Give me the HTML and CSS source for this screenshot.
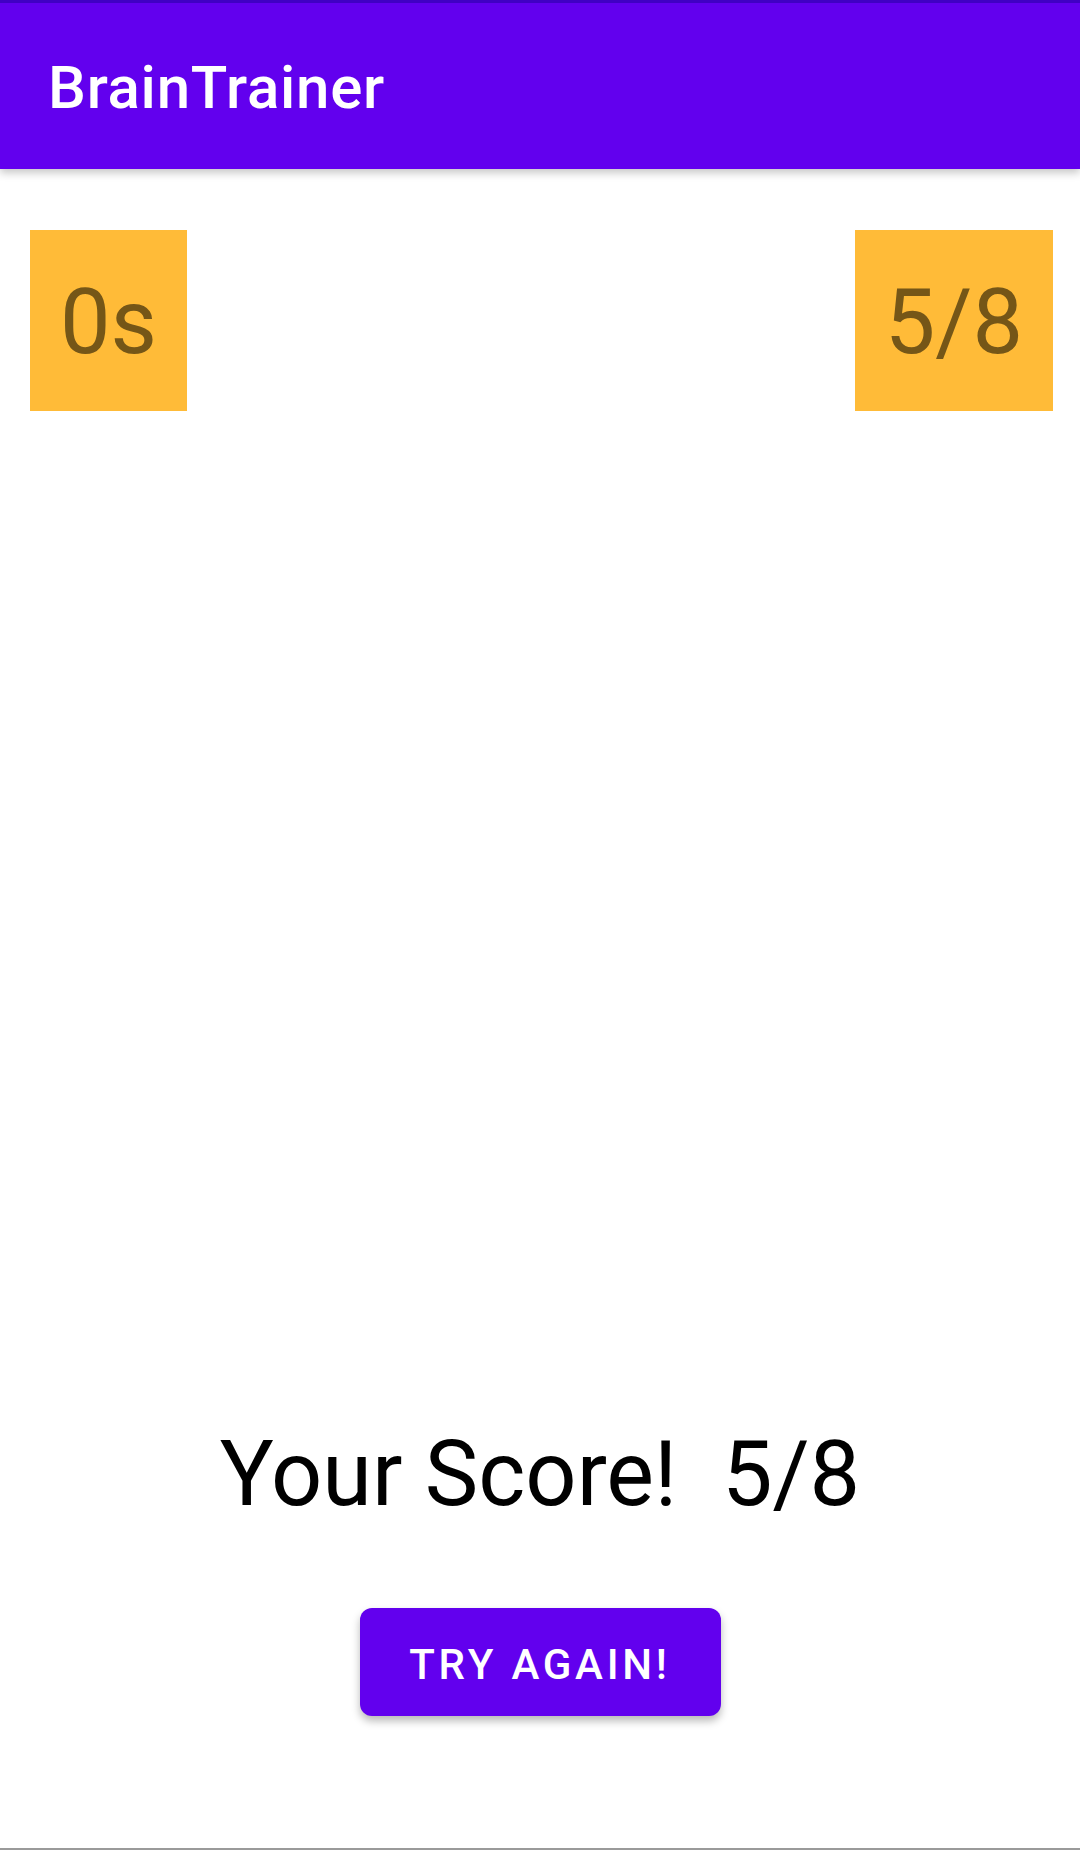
FILE: index.html
```html
<!DOCTYPE html>
<html lang="en">
<head>
<meta charset="utf-8">
<title>BrainTrainer</title>
<link rel="stylesheet" href="styles.css">
</head>
<body>
  <div class="screen">
    <header class="app-bar">
      <h1 class="app-title">BrainTrainer</h1>
    </header>
    <main class="game">
      <div class="stats">
        <div class="stat-box">0s</div>
        <div class="stat-box">5/8</div>
      </div>
      <p class="result">Your Score!&nbsp;&nbsp;5/8</p>
      <div class="actions">
        <button class="try-again" type="button">Try Again!</button>
      </div>
    </main>
    <div class="bottom-edge"></div>
  </div>
</body>
</html>
```
FILE: styles.css
```css
html, body {
  margin: 0;
  padding: 0;
  background: #ffffff;
}

body {
  font-family: Roboto, "Noto Sans", "Liberation Sans", sans-serif;
}

.screen {
  width: 1080px;
  height: 1850px;
  display: flex;
  flex-direction: column;
  overflow: hidden;
}

.app-bar {
  position: relative;
  z-index: 1;
  box-sizing: border-box;
  height: 169px;
  background: #6200ee;
  border-top: 3px solid #4000c4;
  padding: 55px 0 0 48px;
  box-shadow: 0 4px 8px rgba(0, 0, 0, 0.22);
}

.app-title {
  margin: 0;
  font-size: 60px;
  line-height: 60px;
  font-weight: 500;
  letter-spacing: 0.75px;
  color: #ffffff;
}

.game {
  flex: 1;
  display: flex;
  flex-direction: column;
}

.stats {
  display: flex;
  justify-content: space-between;
  padding: 61px 27px 0 30px;
}

.stat-box {
  box-sizing: border-box;
  height: 181px;
  padding: 40px 30px 0;
  background: #ffbb38;
  color: #755617;
  font-size: 90px;
  line-height: normal;
}

.result {
  margin: 1011px 0 0;
  text-align: center;
  font-size: 90px;
  line-height: normal;
  color: #000000;
}

.actions {
  display: flex;
  justify-content: center;
  margin-top: 81px;
}

.try-again {
  width: 361px;
  height: 108px;
  border: none;
  border-radius: 12px;
  background: #6200ee;
  color: #ffffff;
  font-family: Roboto, "Noto Sans", "Liberation Sans", sans-serif;
  font-size: 42px;
  font-weight: 500;
  letter-spacing: 3.75px;
  text-transform: uppercase;
  padding: 4px 0 0;
  box-shadow: 0 5px 8px rgba(0, 0, 0, 0.28);
}

.bottom-edge {
  height: 2px;
  background: #9a9a9a;
}
```
